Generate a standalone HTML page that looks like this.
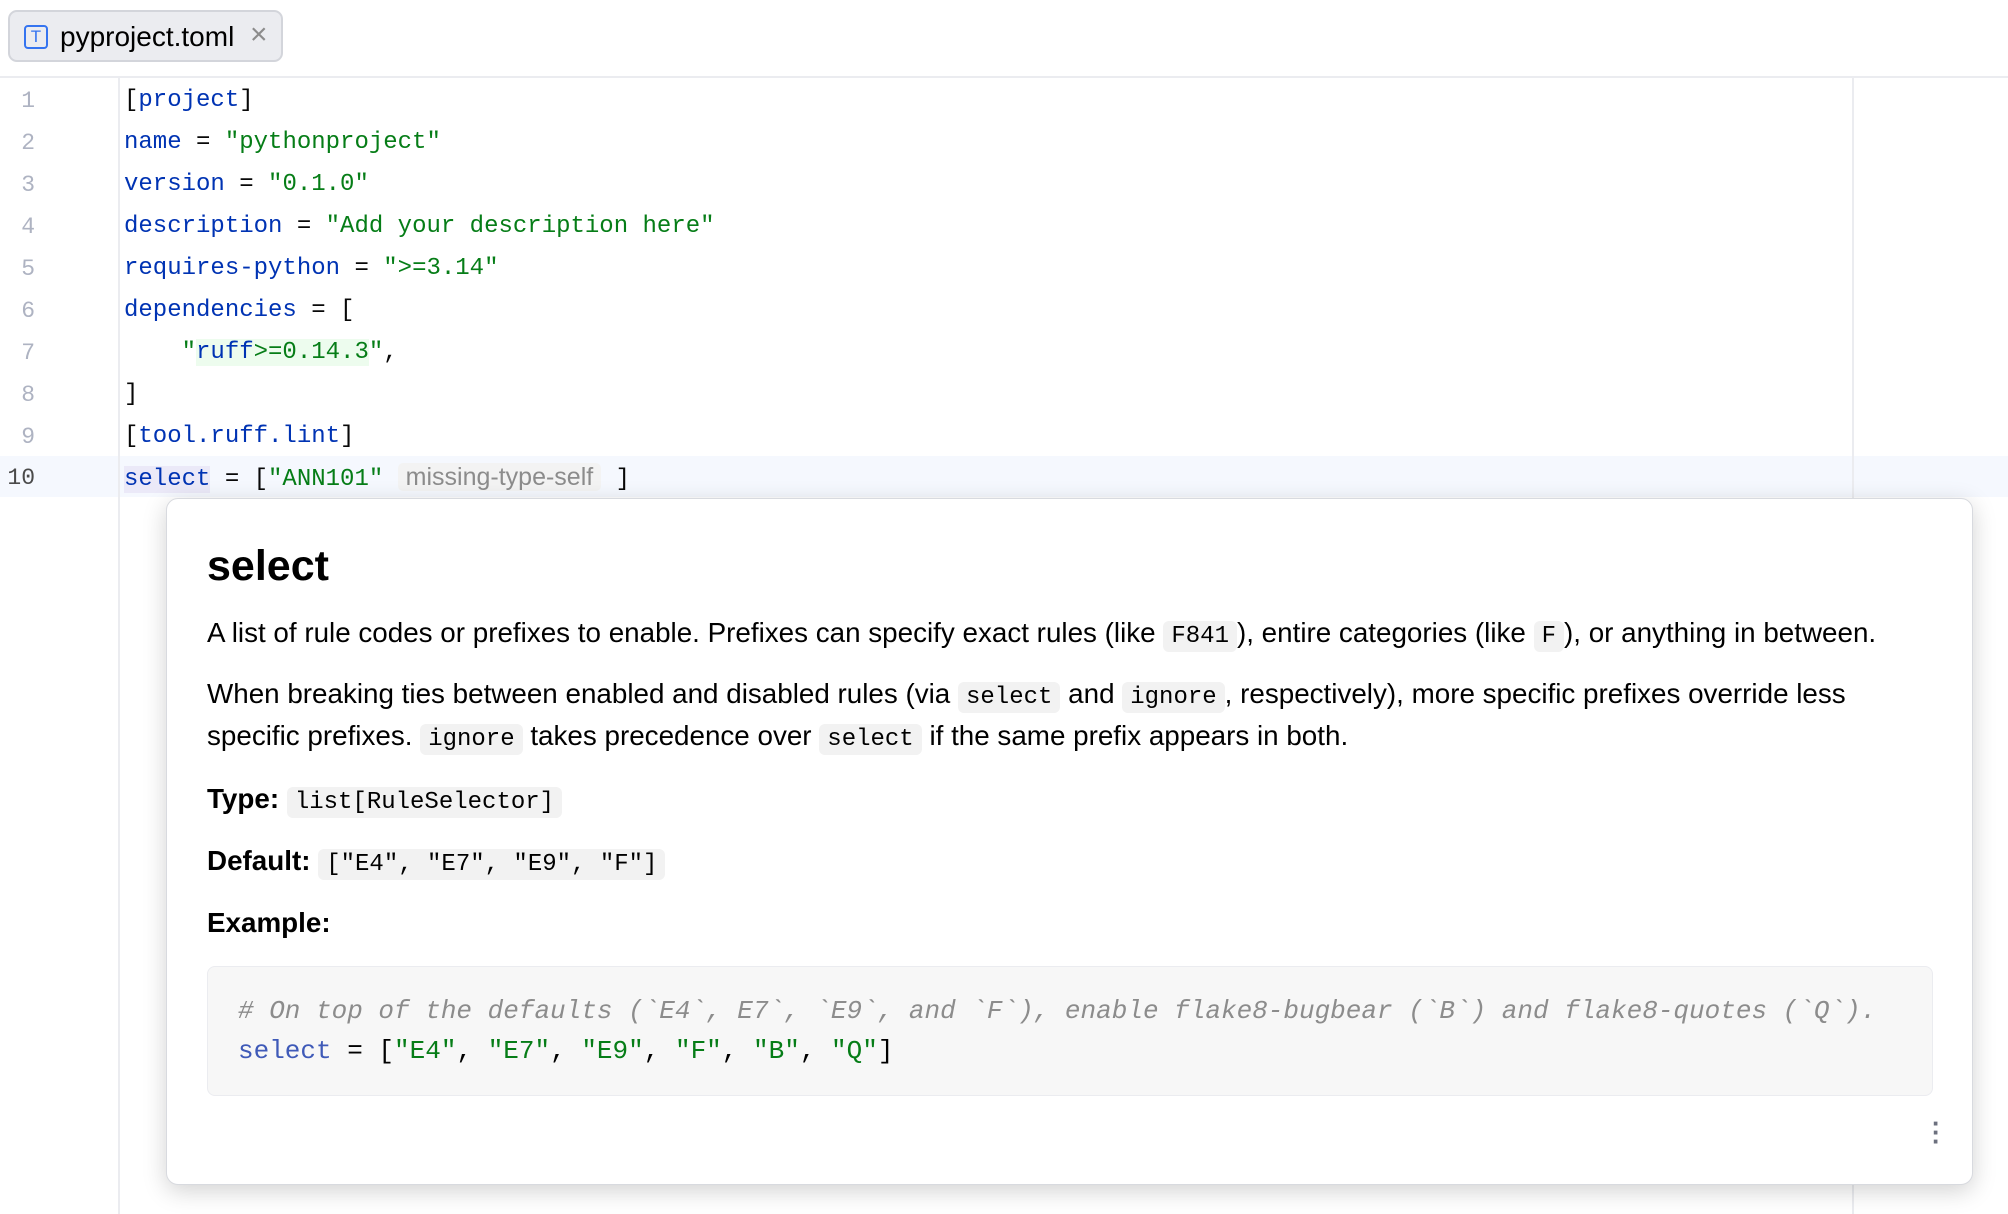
<!DOCTYPE html>
<html><head><meta charset="utf-8"><style>
*{margin:0;padding:0;box-sizing:border-box}
body{width:2008px;height:1214px;background:#fff;position:relative;overflow:hidden;font-family:"Liberation Sans",sans-serif}
.tab{position:absolute;left:8px;top:10px;width:275px;height:52px;background:#ebecf0;border:2px solid #d3d5db;border-radius:9px}
.tab .ic{position:absolute;left:14px;top:13px;width:24px;height:24px;border:2.5px solid #3574f0;border-radius:4px;color:#3574f0;font-size:17px;line-height:19px;text-align:center}
.tab .t{position:absolute;left:50px;top:9px;font-size:28px;color:#000}
.tab .x{position:absolute;left:240px;top:6px;font-size:30px;color:#8c8c8c}
.hline{position:absolute;left:0;top:76px;width:2008px;height:2px;background:#ebecf0}
.gut{position:absolute;left:118px;top:78px;width:2px;height:1136px;background:#ebecf0}
.rm{position:absolute;left:1852px;top:78px;width:2px;height:1136px;background:#ebecf0}
.cur{position:absolute;left:0;top:456px;width:2008px;height:41px;background:#f5f8fe}
.ln{position:absolute;left:0;width:35px;text-align:right;font-family:"Liberation Mono",monospace;font-size:23px;color:#aeb3c2}
.code{position:absolute;left:124px;font-family:"Liberation Mono",monospace;font-size:24px;color:#080808;white-space:pre;line-height:30px}
.k{color:#0033b3}.s{color:#067d17}
.pop{position:absolute;left:166px;top:498px;width:1807px;height:687px;background:#fff;border:1px solid #d8dadf;border-radius:12px;box-shadow:0 6px 24px rgba(0,0,0,.18)}
.p{position:absolute;left:40px;font-size:27.8px;color:#000;white-space:nowrap}
.c{font-family:"Liberation Mono",monospace;font-size:24px;background:#f2f2f2;border-radius:6px;padding:2px 8px}
h1{position:absolute;left:40px;top:43px;font-size:43px;font-weight:bold}
.blk{position:absolute;left:40px;top:467px;width:1726px;height:130px;background:#f7f7f7;border:1px solid #ebecf0;border-radius:8px}
.bc{position:absolute;left:30px;font-family:"Liberation Mono",monospace;font-size:26px;white-space:pre}
</style></head><body>
<div class="tab"><div class="ic">T</div><div class="t">pyproject.toml</div><div class="x">×</div></div>
<div class="hline"></div>
<div class="cur"></div>
<div class="gut"></div><div class="rm"></div>
<div class="ln" style="top:88px">1</div>
<div class="ln" style="top:130px">2</div>
<div class="ln" style="top:172px">3</div>
<div class="ln" style="top:214px">4</div>
<div class="ln" style="top:256px">5</div>
<div class="ln" style="top:298px">6</div>
<div class="ln" style="top:340px">7</div>
<div class="ln" style="top:382px">8</div>
<div class="ln" style="top:424px">9</div>
<div class="ln" style="top:465px;color:#4a4a4a">10</div>
<div class="code" style="top:86px">[<span class="k">project</span>]</div>
<div class="code" style="top:128px"><span class="k">name</span> = <span class="s">"pythonproject"</span></div>
<div class="code" style="top:170px"><span class="k">version</span> = <span class="s">"0.1.0"</span></div>
<div class="code" style="top:212px"><span class="k">description</span> = <span class="s">"Add your description here"</span></div>
<div class="code" style="top:254px"><span class="k">requires-python</span> = <span class="s">"&gt;=3.14"</span></div>
<div class="code" style="top:296px"><span class="k">dependencies</span> = [</div>
<div class="code" style="top:338px">    <span class="s">"<span style="background:#edfcee"><span class="k">ruff</span>&gt;=0.14.3</span>"</span>,</div>
<div class="code" style="top:380px">]</div>
<div class="code" style="top:422px">[<span class="k">tool.ruff.lint</span>]</div>
<div class="code" style="top:462px"><span class="k" style="background:#ebe9f8">select</span> = [<span class="s">"ANN101"</span> <span style="font-family:'Liberation Sans',sans-serif;color:#8c8c8c;background:#f3f3f3;border-radius:5px;padding:0 8px;font-size:25px">missing-type-self</span> ]</div>
<div class="pop">
<h1>select</h1>
<div class="p" style="top:118px">A list of rule codes or prefixes to enable. Prefixes can specify exact rules (like <span class="c">F841</span>), entire categories (like <span class="c">F</span>), or anything in between.</div>
<div class="p" style="top:179px">When breaking ties between enabled and disabled rules (via <span class="c">select</span> and <span class="c">ignore</span>, respectively), more specific prefixes override less</div>
<div class="p" style="top:221px">specific prefixes. <span class="c">ignore</span> takes precedence over <span class="c">select</span> if the same prefix appears in both.</div>
<div class="p" style="top:284px"><b>Type:</b> <span class="c">list[RuleSelector]</span></div>
<div class="p" style="top:346px"><b>Default:</b> <span class="c">["E4", "E7", "E9", "F"]</span></div>
<div class="p" style="top:408px"><b>Example:</b></div>
<div class="blk">
<div class="bc" style="top:29px;color:#8c8c8c;font-style:italic"># On top of the defaults (`E4`, E7`, `E9`, and `F`), enable flake8-bugbear (`B`) and flake8-quotes (`Q`).</div>
<div class="bc" style="top:69px"><span style="color:#3f5ab8">select</span> = [<span class="s">"E4"</span>, <span class="s">"E7"</span>, <span class="s">"E9"</span>, <span class="s">"F"</span>, <span class="s">"B"</span>, <span class="s">"Q"</span>]</div>
</div>
<div style="position:absolute;left:1765px;top:620px;color:#6c707e;font-size:26px;font-weight:bold;line-height:9px">·<br>·<br>·</div>
</div>
</body></html>
